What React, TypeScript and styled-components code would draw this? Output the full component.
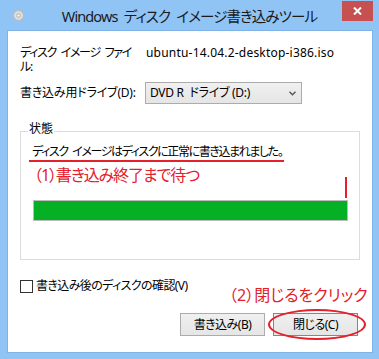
import React from "react";
import styled, { createGlobalStyle } from "styled-components";

const GlobalStyle = createGlobalStyle`
  html, body { margin: 0; padding: 0; }
  body {
    background: #8fc4f5;
    font-family: "Noto Sans", "Noto Sans CJK JP", sans-serif;
  }
`;

const RED = "#e3202b";

const Window = styled.div`
  width: 379px;
  height: 359px;
  background: #8fc4f5;
  display: flex;
  flex-direction: column;
  font-family: "Noto Sans", "Noto Sans CJK JP", sans-serif;
  font-feature-settings: "palt";
`;

const TitleBar = styled.div`
  height: 31px;
  display: grid;
  grid-template-columns: 1fr auto 1fr;
  align-items: start;
`;

const IconCell = styled.div`
  padding: 10px 0 0 13px;
  display: flex;
`;

const Title = styled.div`
  font-size: 14.5px;
  line-height: 20px;
  padding-top: 6px;
  letter-spacing: -0.9px;
  color: #1a1a1a;
  white-space: nowrap;
`;

const CloseCell = styled.div`
  display: flex;
  justify-content: flex-end;
  padding: 1px 6px 0 0;
`;

const CloseButton = styled.div`
  width: 31px;
  height: 20px;
  background: #c75050;
  display: flex;
  align-items: center;
  justify-content: center;
`;

const Client = styled.div`
  position: relative;
  margin-left: 8px;
  width: 364px;
  height: 321px;
  background: #fff;
  box-shadow: 0 0 0 1px #7fb2e6;
  padding: 15px 12px 0;
  box-sizing: border-box;
  font-size: 12px;
  line-height: 14px;
  color: #000;
  display: flex;
  flex-direction: column;
`;

const FieldRow = styled.div<{ $center?: boolean; $gap?: number }>`
  display: grid;
  grid-template-columns: 125px 1fr;
  align-items: ${(p) => (p.$center ? "center" : "start")};
  margin-top: ${(p) => p.$gap ?? 0}px;
`;

const Label = styled.div<{ $track?: number }>`
  white-space: nowrap;
  letter-spacing: ${(p) => p.$track ?? 0}px;
`;

const Value = styled.div`
  padding-left: 1px;
  white-space: nowrap;
  letter-spacing: 0.2px;
`;

const Select = styled.div`
  width: 157px;
  height: 22px;
  box-sizing: border-box;
  border: 1px solid #acacac;
  background: linear-gradient(#f0f0f0, #e5e5e5);
  display: flex;
  align-items: center;
  justify-content: space-between;
  padding: 0 5px 0 4px;
  white-space: nowrap;
  letter-spacing: -0.3px;
`;

const GroupBox = styled.div`
  position: relative;
  margin-top: 27px;
  height: 129px;
  box-sizing: border-box;
  border: 1px solid #dcdcdc;
  display: flex;
  flex-direction: column;
  align-items: flex-start;
`;

const Legend = styled.div`
  margin: -10px 0 0 7px;
  padding: 0 1px;
  background: #fff;
`;

const StatusText = styled.div`
  margin: 9px 0 0 8px;
  padding: 0 2px 1px 3px;
  border-bottom: 2px solid ${RED};
  white-space: nowrap;
  letter-spacing: -1.4px;
`;

const Annotation = styled.div<{ $track?: number }>`
  font-size: 16px;
  line-height: 20px;
  color: ${RED};
  white-space: nowrap;
  letter-spacing: ${(p) => p.$track ?? 0}px;
`;

const FirstNote = styled(Annotation)`
  margin: 3px 0 0 13px;
`;

const SecondNote = styled(Annotation)`
  position: absolute;
  left: 221px;
  top: 254px;
`;

const Progress = styled.div`
  margin: 15px 0 0 12px;
  width: 315px;
  height: 21px;
  box-sizing: border-box;
  border: 1px solid #bcbcbc;
  background: #e6e6e6;
  display: flex;
`;

const ProgressFill = styled.div`
  background: #06b025;
  height: 100%;
`;

const Marker = styled.div`
  position: absolute;
  left: 324px;
  top: 45px;
  width: 2px;
  height: 21px;
  background: ${RED};
`;

const CheckRow = styled.div`
  margin-top: 19px;
  display: flex;
  align-items: center;
  gap: 3px;
  letter-spacing: -0.6px;
`;

const CheckBox = styled.div`
  width: 13px;
  height: 13px;
  box-sizing: border-box;
  border: 1px solid #333;
  background: #fff;
`;

const ButtonRow = styled.div`
  margin-top: 20px;
  display: flex;
  justify-content: flex-end;
  gap: 8px;
  padding-right: 2px;
`;

const Button = styled.div<{ $focused?: boolean }>`
  width: 85px;
  height: 23px;
  box-sizing: border-box;
  border: 1px solid ${(p) => (p.$focused ? "#3399ff" : "#acacac")};
  background: linear-gradient(#f0f0f0, #e5e5e5);
  display: flex;
  align-items: center;
  justify-content: center;
  white-space: nowrap;
  letter-spacing: -0.5px;
`;

const Ellipse = styled.div`
  position: absolute;
  left: 260px;
  top: 278px;
  width: 98px;
  height: 31px;
  box-sizing: border-box;
  border: 2px solid ${RED};
  border-radius: 50%;
`;

const DiscIcon = () => (
  <svg width="11" height="11" viewBox="0 0 11 11">
    <circle cx="5.5" cy="5.5" r="5" fill="#dcdcdc" stroke="#b8b8b8" />
    <circle cx="5.5" cy="5.5" r="1.6" fill="#fff" stroke="#a0a0a0" strokeWidth="0.8" />
  </svg>
);

const CloseGlyph = () => (
  <svg width="9" height="8" viewBox="0 0 9 8">
    <path d="M1 0.5 L8 7.5 M8 0.5 L1 7.5" stroke="#fff" strokeWidth="2" />
  </svg>
);

const Chevron = () => (
  <svg width="7" height="5" viewBox="0 0 7 5">
    <path d="M0.5 0.8 L3.5 3.8 L6.5 0.8" stroke="#555" strokeWidth="1.4" fill="none" />
  </svg>
);

export default function App() {
  return (
    <>
      <GlobalStyle />
      <Window>
        <TitleBar>
          <IconCell>
            <DiscIcon />
          </IconCell>
          <Title>{"Windows\u2002ディスク\u2002イメージ書き込みツール"}</Title>
          <CloseCell>
            <CloseButton>
              <CloseGlyph />
            </CloseButton>
          </CloseCell>
        </TitleBar>
        <Client>
          <FieldRow>
            <Label $track={-1.3}>
              {"ディスク\u2002イメージ\u2002ファイ"}
              <br />
              ル:
            </Label>
            <Value>ubuntu-14.04.2-desktop-i386.iso</Value>
          </FieldRow>
          <FieldRow $center $gap={8}>
            <Label $track={-0.2}>書き込み用ドライブ(D):</Label>
            <Select>
              <span>{"DVD R\u2002ドライブ (D:)"}</span>
              <Chevron />
            </Select>
          </FieldRow>
          <GroupBox>
            <Legend>状態</Legend>
            <StatusText>{"ディスク\u2002イメージはディスクに正常に書き込まれました。"}</StatusText>
            <FirstNote $track={-1.1}>（1）書き込み終了まで待つ</FirstNote>
            <Progress>
              <ProgressFill style={{ width: "100%" }} />
            </Progress>
            <Marker />
          </GroupBox>
          <CheckRow>
            <CheckBox />
            <span>書き込み後のディスクの確認(V)</span>
          </CheckRow>
          <ButtonRow>
            <Button>書き込み(B)</Button>
            <Button $focused>閉じる(C)</Button>
          </ButtonRow>
          <SecondNote>（2）閉じるをクリック</SecondNote>
          <Ellipse />
        </Client>
      </Window>
    </>
  );
}
